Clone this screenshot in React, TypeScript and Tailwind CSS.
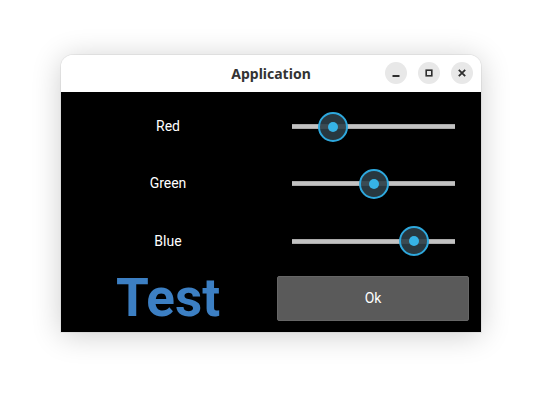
const rows = [
  { label: "Red", value: 25 },
  { label: "Green", value: 50 },
  { label: "Blue", value: 75 },
];

const Slider = ({ value }: { value: number }) => (
  <div className="relative ml-[21px] mr-[26px] h-[5px] bg-[#c2c2c2] border-y border-[#a9a9a9]">
    {/* 값 위치의 손잡이 */}
    <div
      className="absolute top-1/2 w-[30px] h-[30px] -translate-x-1/2 -translate-y-1/2 rounded-full border-2 border-[#2ea8dd] bg-[#2c3e47]/90 flex items-center justify-center"
      style={{ left: `${value}%` }}
    >
      <div className="w-[10px] h-[10px] rounded-full bg-[#36b3e6]" />
    </div>
  </div>
);

const App = () => {
  return (
    <div className="w-[542px] h-[399px] bg-white pt-[55px] pl-[61px]" style={{ fontFamily: "Roboto, 'Noto Sans', sans-serif" }}>
      {/* 창 */}
      <div className="w-[420px] rounded-t-[12px] overflow-hidden shadow-[0_3px_30px_rgba(0,0,0,0.2),0_0_0_1px_rgba(0,0,0,0.05)]">
        {/* 제목 표시줄 */}
        <div className="relative h-[37px] bg-white flex items-center justify-center">
          <span className="text-[14px] font-bold text-[#333333]" style={{ fontFamily: "'Noto Sans', sans-serif" }}>
            Application
          </span>
          <div className="absolute right-[8px] top-[7px] flex gap-[11px]">
            <button className="w-[22px] h-[22px] rounded-full bg-[#e8e8e8] flex items-center justify-center">
              <svg width="10" height="10" viewBox="0 0 10 10"><path d="M1.5 8h7" stroke="#2e2e2e" strokeWidth="1.8" /></svg>
            </button>
            <button className="w-[22px] h-[22px] rounded-full bg-[#e8e8e8] flex items-center justify-center">
              <svg width="10" height="10" viewBox="0 0 10 10"><rect x="2.2" y="2.2" width="5.6" height="5.6" fill="none" stroke="#2e2e2e" strokeWidth="1.6" /></svg>
            </button>
            <button className="w-[22px] h-[22px] rounded-full bg-[#e8e8e8] flex items-center justify-center">
              <svg width="10" height="10" viewBox="0 0 10 10"><path d="M1.8 1.8l6.4 6.4M8.2 1.8l-6.4 6.4" stroke="#2e2e2e" strokeWidth="1.8" /></svg>
            </button>
          </div>
        </div>

        {/* 내용 */}
        <div className="h-[240px] bg-black pt-[6px]">
          {rows.map((r, i) => (
            <div key={r.label} className={`grid grid-cols-2 items-center ${i === 2 ? "h-[58px]" : "h-[57px]"}`}>
              <div className="text-center pl-[4px] text-[14px] text-white">{r.label}</div>
              <Slider value={r.value} />
            </div>
          ))}
          <div className="grid grid-cols-2 items-center h-[56px]">
            <div className="text-center pl-[4px] text-[53px] leading-none font-bold text-[#3c7fc3]">Test</div>
            <button className="ml-[6px] mr-[12px] h-[45px] bg-[#5a5a5a] border border-[#666666] rounded-[2px] text-[14px] text-white">
              Ok
            </button>
          </div>
        </div>
      </div>
    </div>
  );
};

export default App;
